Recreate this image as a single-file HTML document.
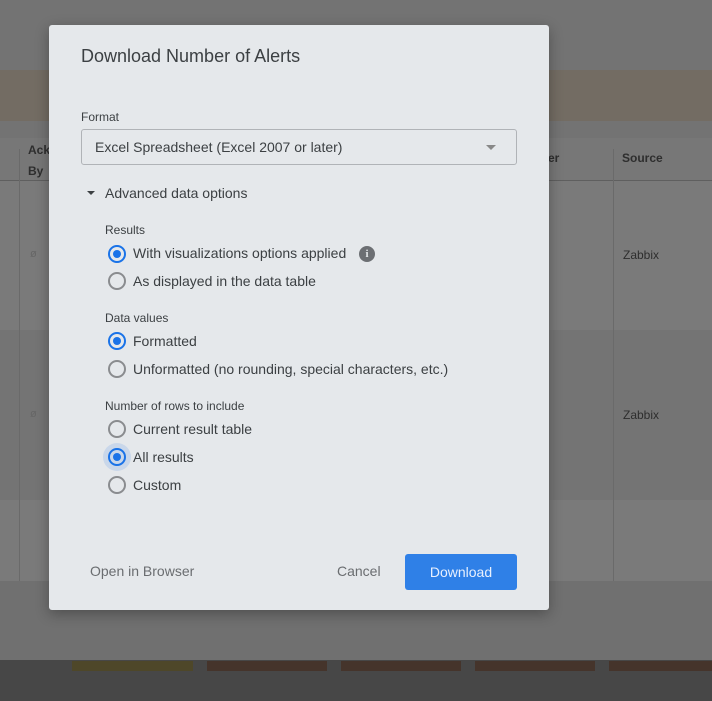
<!DOCTYPE html>
<html><head><style>
*{margin:0;padding:0;box-sizing:border-box}
body{width:712px;height:701px;position:relative;overflow:hidden;background:#737373;font-family:"Liberation Sans",sans-serif}
.a{position:absolute}
.dlg{left:49px;top:25px;width:500px;height:585px;background:#e5e8eb;border-radius:3px;box-shadow:0 4px 14px rgba(0,0,0,.3)}
.t{color:#3c4043}
.r{position:absolute;width:18px;height:18px;border-radius:50%;border:2px solid #8a8c8f}
.r.on{border-color:#1a73e8}
.r.on::after{content:"";position:absolute;left:3px;top:3px;width:8px;height:8px;border-radius:50%;background:#1a73e8}
.lab{position:absolute;left:133px;font-size:14px;color:#3c4043;line-height:18px}
.sec{position:absolute;left:105px;font-size:12px;color:#3c4043}
</style></head><body>
<div class="a" style="left:0;top:70px;width:712px;height:51px;background:#736c63"></div>
<div class="a" style="left:0;top:138px;width:712px;height:42px;background:#777"></div>
<div class="a" style="left:0;top:180px;width:712px;height:1px;background:#5f5f5f"></div>
<div class="a" style="left:0;top:181px;width:712px;height:149px;background:#7a7a7a"></div>
<div class="a" style="left:0;top:330px;width:712px;height:170px;background:#747474"></div>
<div class="a" style="left:0;top:500px;width:712px;height:81px;background:#7a7a7a"></div>
<div class="a" style="left:19px;top:149px;width:1px;height:432px;background:#6a6a6a"></div>
<div class="a" style="left:613px;top:149px;width:1px;height:432px;background:#6a6a6a"></div>
<div class="a" style="left:28px;top:140px;font-size:12px;font-weight:bold;color:#2e2e2e;line-height:21px">Ack<br>By</div>
<div class="a" style="left:622px;top:151px;font-size:12px;font-weight:bold;color:#2e2e2e">Source</div>
<div class="a" style="left:548px;top:151px;font-size:12px;font-weight:bold;color:#2e2e2e">er</div>
<div class="a" style="left:623px;top:248px;font-size:12px;color:#2e2e2e">Zabbix</div>
<div class="a" style="left:623px;top:408px;font-size:12px;color:#2e2e2e">Zabbix</div>
<div class="a" style="left:30px;top:248px;font-size:11px;color:#666">ø</div>
<div class="a" style="left:30px;top:408px;font-size:11px;color:#666">ø</div>
<div class="a" style="left:0;top:581px;width:712px;height:79px;background:#707070"></div>
<div class="a" style="left:0;top:660px;width:712px;height:41px;background:#474747"></div>
<div class="a" style="left:72px;top:661px;width:121px;height:10px;background:#4e4729"></div>
<div class="a" style="left:207px;top:661px;width:120px;height:10px;background:#45342b"></div>
<div class="a" style="left:341px;top:661px;width:120px;height:10px;background:#45342b"></div>
<div class="a" style="left:475px;top:661px;width:120px;height:10px;background:#45342b"></div>
<div class="a" style="left:609px;top:661px;width:103px;height:10px;background:#45342b"></div>

<div class="a dlg"></div>
<div class="a t" style="left:81px;top:46px;font-size:18px">Download Number of Alerts</div>
<div class="a t" style="left:81px;top:110px;font-size:12px">Format</div>
<div class="a" style="left:81px;top:129px;width:436px;height:36px;border:1px solid #b0b3b7;border-radius:3px"></div>
<div class="a t" style="left:95px;top:139px;font-size:14px">Excel Spreadsheet (Excel 2007 or later)</div>
<div class="a" style="left:486px;top:145px;width:0;height:0;border-left:5px solid transparent;border-right:5px solid transparent;border-top:5px solid #888"></div>
<div class="a" style="left:87px;top:191px;width:0;height:0;border-left:4px solid transparent;border-right:4px solid transparent;border-top:4px solid #3c4043"></div>
<div class="a t" style="left:105px;top:185px;font-size:14px">Advanced data options</div>

<div class="sec" style="top:223px">Results</div>
<div class="r on" style="left:108px;top:245px"></div><div class="lab" style="top:244px">With visualizations options applied</div>
<div class="a" style="left:359px;top:246px;width:16px;height:16px;border-radius:50%;background:#6c6f73;color:#e5e8eb;font-size:11px;font-weight:bold;text-align:center;line-height:16px;font-family:'Liberation Serif',serif">i</div>
<div class="r" style="left:108px;top:272px"></div><div class="lab" style="top:272px">As displayed in the data table</div>

<div class="sec" style="top:311px">Data values</div>
<div class="r on" style="left:108px;top:332px"></div><div class="lab" style="top:332px">Formatted</div>
<div class="r" style="left:108px;top:360px"></div><div class="lab" style="top:360px">Unformatted (no rounding, special characters, etc.)</div>

<div class="sec" style="top:399px">Number of rows to include</div>
<div class="r" style="left:108px;top:420px"></div><div class="lab" style="top:420px">Current result table</div>
<div class="a" style="left:103px;top:443px;width:28px;height:28px;border-radius:50%;background:#c9d7ea"></div>
<div class="r on" style="left:108px;top:448px"></div><div class="lab" style="top:448px">All results</div>
<div class="r" style="left:108px;top:476px"></div><div class="lab" style="top:476px">Custom</div>

<div class="a" style="left:90px;top:563px;font-size:14px;color:#6a6d70">Open in Browser</div>
<div class="a" style="left:337px;top:563px;font-size:14px;color:#6a6d70">Cancel</div>
<div class="a" style="left:405px;top:554px;width:112px;height:36px;background:#2f80e7;border-radius:3px;color:#e8f0fe;font-size:14px;text-align:center;line-height:36px">Download</div>
</body></html>
